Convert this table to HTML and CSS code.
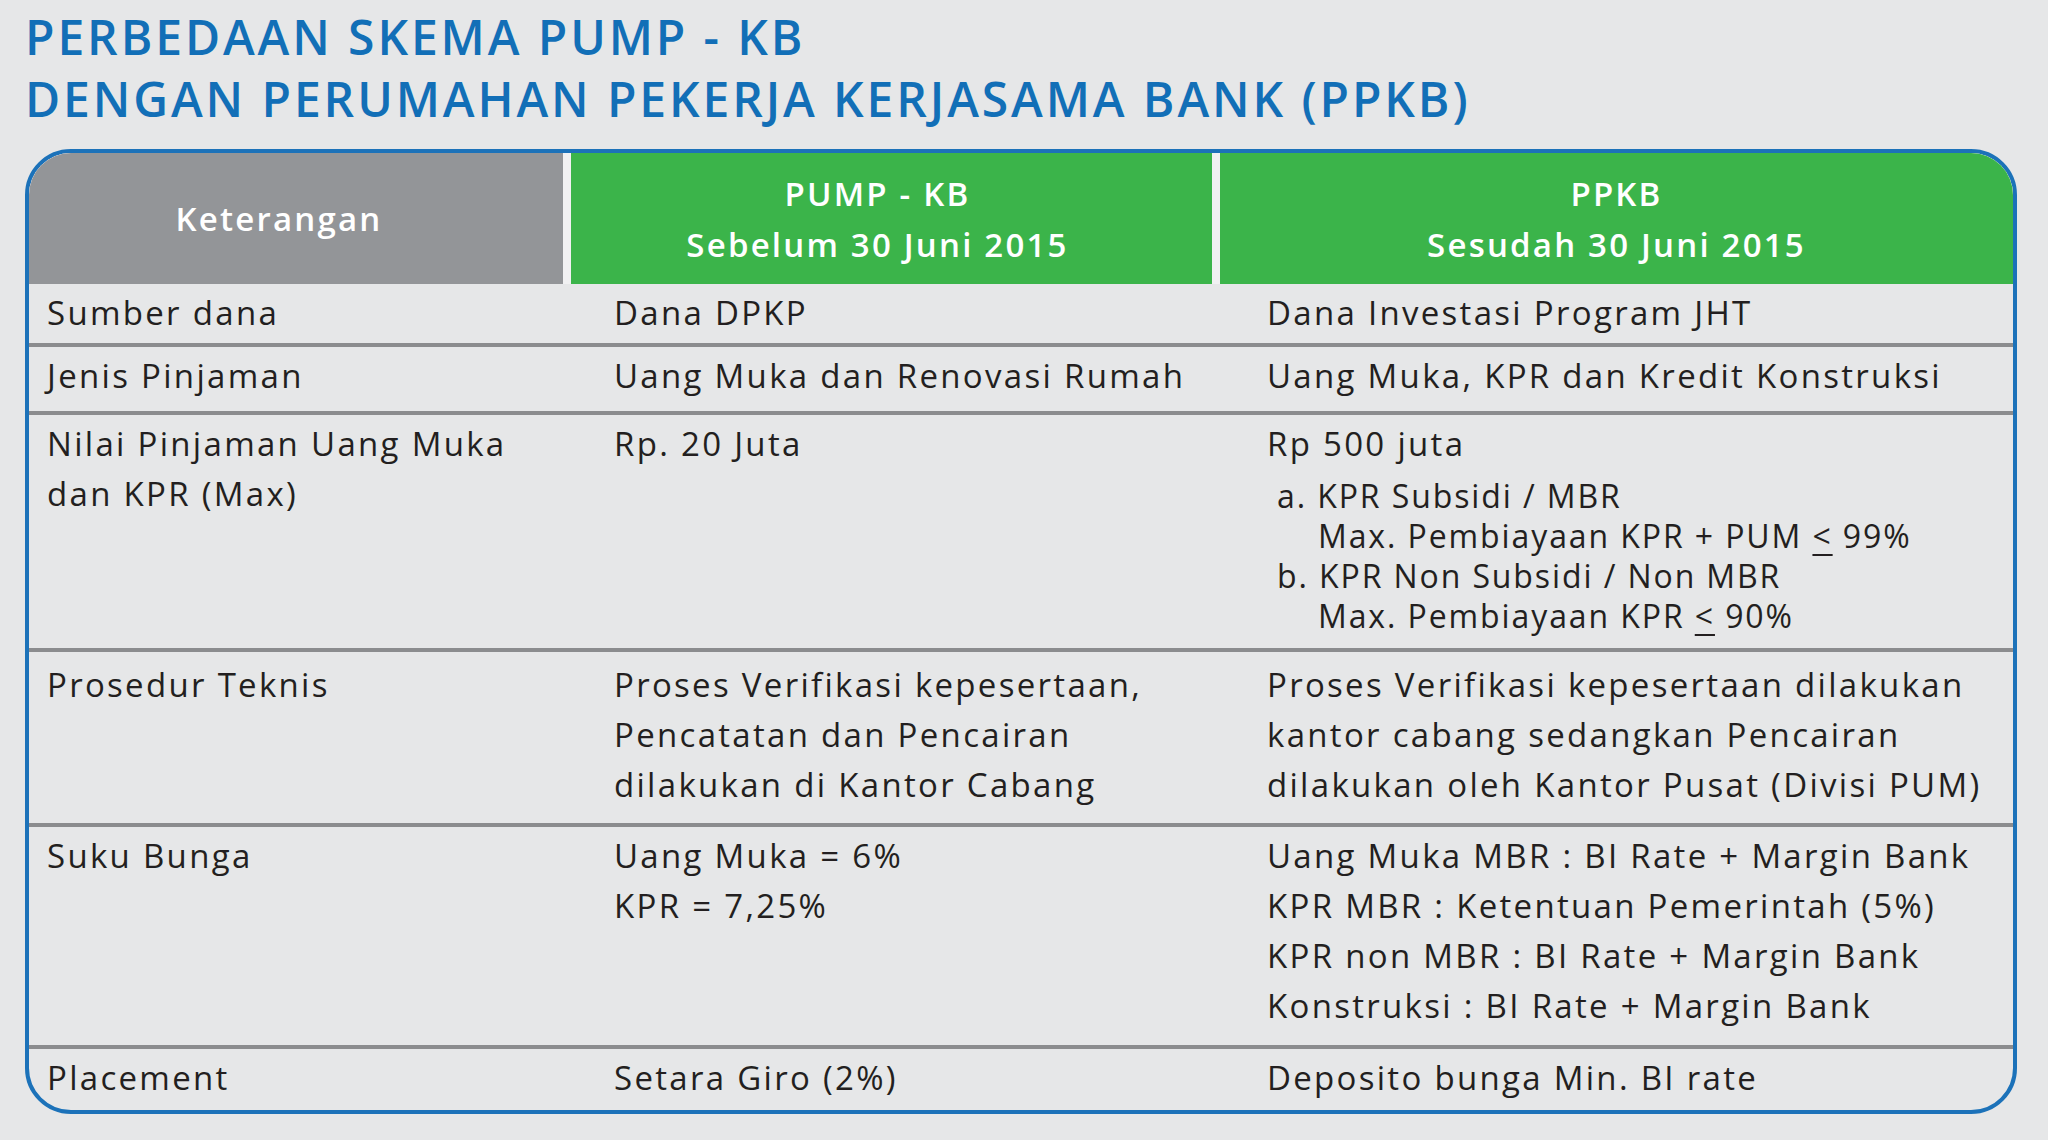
FILE: index.html
```html
<!DOCTYPE html>
<html lang="id">
<head>
<meta charset="utf-8">
<title>Perbedaan Skema PUMP - KB dengan PPKB</title>
<link rel="stylesheet" href="styles.css">
</head>
<body>
<div class="page">
  <h1 class="title">PERBEDAAN SKEMA PUMP - KB<br>DENGAN PERUMAHAN PEKERJA KERJASAMA BANK (PPKB)</h1>
  <div class="table">
    <div class="head">
      <div class="hcell hgray">Keterangan</div>
      <div class="hcell hgreen hmid">PUMP - KB<br>Sebelum 30 Juni 2015</div>
      <div class="hcell hgreen">PPKB<br>Sesudah 30 Juni 2015</div>
    </div>
    <div class="row r1">
      <div class="cell">Sumber dana</div>
      <div class="cell">Dana DPKP</div>
      <div class="cell">Dana Investasi Program JHT</div>
    </div>
    <div class="row r2">
      <div class="cell">Jenis Pinjaman</div>
      <div class="cell">Uang Muka dan Renovasi Rumah</div>
      <div class="cell">Uang Muka, KPR dan Kredit Konstruksi</div>
    </div>
    <div class="row r3">
      <div class="cell">Nilai Pinjaman Uang Muka<br>dan KPR (Max)</div>
      <div class="cell">Rp. 20 Juta</div>
      <div class="cell">
        <div>Rp 500 juta</div>
        <ul class="list">
          <li><span class="mark">a.</span> KPR Subsidi / MBR</li>
          <li class="sub">Max. Pembiayaan KPR + PUM <span class="le">&lt;</span> 99%</li>
          <li><span class="mark">b.</span> KPR Non Subsidi / Non MBR</li>
          <li class="sub">Max. Pembiayaan KPR <span class="le">&lt;</span> 90%</li>
        </ul>
      </div>
    </div>
    <div class="row r4">
      <div class="cell">Prosedur Teknis</div>
      <div class="cell">Proses Verifikasi kepesertaan,<br>Pencatatan dan Pencairan<br>dilakukan di Kantor Cabang</div>
      <div class="cell">Proses Verifikasi kepesertaan dilakukan<br>kantor cabang sedangkan Pencairan<br>dilakukan oleh Kantor Pusat (Divisi PUM)</div>
    </div>
    <div class="row r5">
      <div class="cell">Suku Bunga</div>
      <div class="cell">Uang Muka = 6%<br>KPR = 7,25%</div>
      <div class="cell">Uang Muka MBR : BI Rate + Margin Bank<br>KPR MBR : Ketentuan Pemerintah (5%)<br>KPR non MBR : BI Rate + Margin Bank<br>Konstruksi : BI Rate + Margin Bank</div>
    </div>
    <div class="row r6">
      <div class="cell">Placement</div>
      <div class="cell">Setara Giro (2%)</div>
      <div class="cell">Deposito bunga Min. BI rate</div>
    </div>
  </div>
</div>
</body>
</html>
```

FILE: styles.css
```css
html, body {
  margin: 0;
  padding: 0;
  background: #e6e7e8;
}

.page {
  width: 2048px;
  height: 1140px;
  padding: 6px 0 0 25px;
  box-sizing: border-box;
  font-family: "Open Sans", "Liberation Sans", sans-serif;
  color: #231f20;
}

.title {
  margin: 0 0 19px 0;
  font-size: 48px;
  line-height: 62px;
  font-weight: 600;
  color: #126fb7;
  letter-spacing: 2.9px;
}

.table {
  width: 1992px;
  box-sizing: border-box;
  border: 4px solid #1c72b9;
  border-radius: 46px;
  overflow: hidden;
  background: #e6e7e8;
}

.head {
  display: grid;
  grid-template-columns: 534px 641px 1fr;
  column-gap: 8px;
  height: 131px;
  background: #f1f1f2;
}

.hcell {
  display: flex;
  align-items: center;
  justify-content: center;
  text-align: center;
  color: #ffffff;
  font-size: 33px;
  line-height: 51px;
  font-weight: 600;
  letter-spacing: 2.2px;
}

.hgray {
  background: #939598;
  padding-right: 34px;
}

.hmid {
  padding-right: 28px;
}

.hgreen {
  background: #3bb44a;
}

.row {
  display: grid;
  grid-template-columns: 567px 653px 1fr;
  padding: 4px 0 0 18px;
  font-size: 33px;
  line-height: 50px;
  letter-spacing: 2.3px;
  border-top: 4px solid #8b8c8e;
  box-sizing: border-box;
}

.row.r1 {
  border-top: none;
  height: 59px;
}

.row.r2 {
  height: 68px;
}

.row.r3 {
  height: 237px;
}

.row.r4 {
  height: 175px;
  padding-top: 8px;
}

.row.r5 {
  height: 222px;
}

.row.r6 {
  height: 65px;
}

.list {
  list-style: none;
  margin: 7px 0 0 0;
  padding: 0 0 0 10px;
  font-size: 32px;
  line-height: 40px;
  letter-spacing: 1.9px;
}

.list .sub {
  padding-left: 41px;
}

.le {
  text-decoration: underline;
  text-underline-offset: 6px;
  text-decoration-thickness: 2px;
}
```
